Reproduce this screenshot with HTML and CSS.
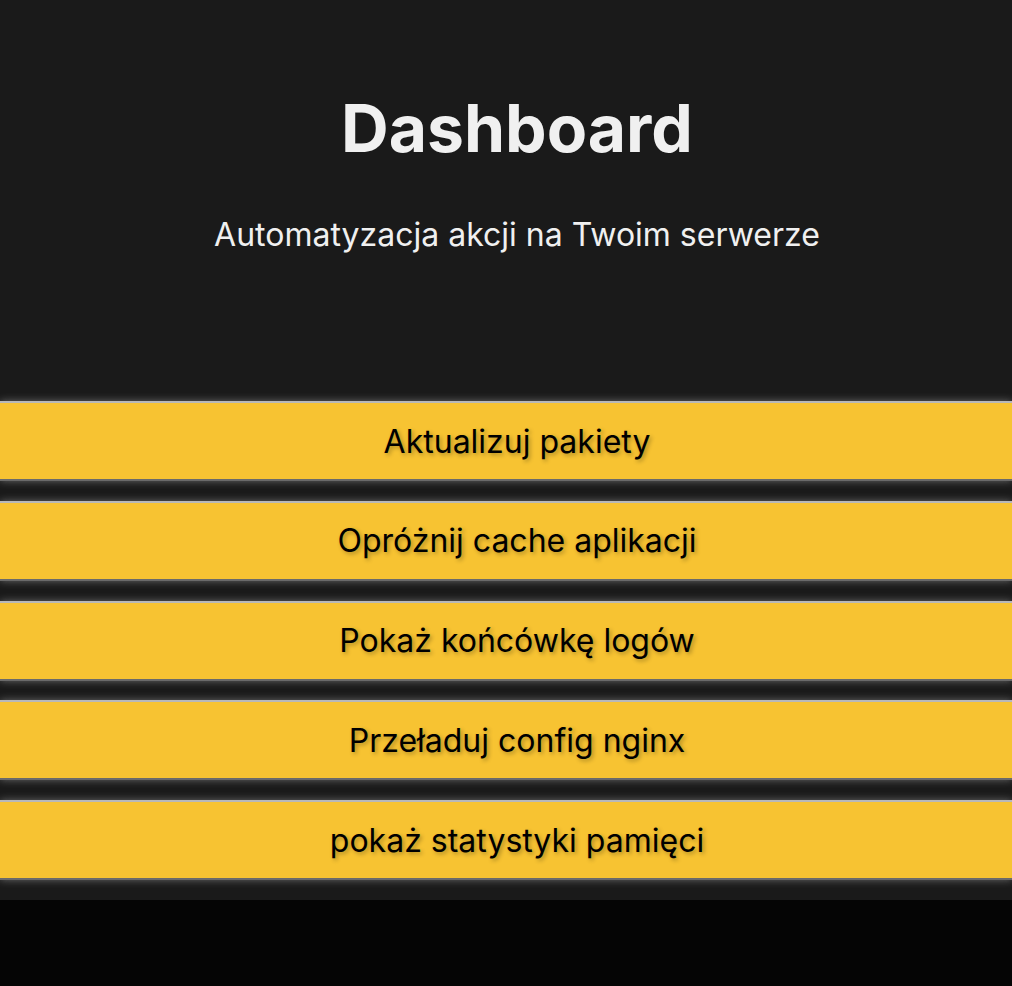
FILE: index.html
```html
<!DOCTYPE html>
<html lang="pl">
<head>
<meta charset="utf-8">
<title>Dashboard</title>
<link rel="stylesheet" href="styles.css">
</head>
<body>
<div class="app">
  <header class="header">
    <h1 class="title">Dashboard</h1>
    <p class="subtitle">Automatyzacja akcji na Twoim serwerze</p>
  </header>
  <main class="actions">
    <button class="action">Aktualizuj pakiety</button>
    <button class="action">Opróżnij cache aplikacji</button>
    <button class="action">Pokaż końcówkę logów</button>
    <button class="action">Przeładuj config nginx</button>
    <button class="action">pokaż statystyki pamięci</button>
  </main>
</div>
</body>
</html>
```

FILE: styles.css
```css
html, body {
  margin: 0;
  padding: 0;
  background: #050505;
}
body {
  font-family: Inter, "Noto Sans", sans-serif;
}
.app {
  background: #1a1a1a;
  padding-bottom: 20px;
}
.header {
  text-align: center;
  padding-top: 88px;
  padding-left: 22px;
  height: 401px;
  box-sizing: border-box;
}
.title {
  margin: 0;
  font-size: 66px;
  line-height: 80px;
  font-weight: 700;
  color: #f0f0f0;
}
.subtitle {
  margin: 47px 0 0;
  font-size: 32px;
  line-height: 40px;
  color: #f0f0f0;
}
.actions {
  display: flex;
  flex-direction: column;
  gap: 19.75px;
}
.action {
  display: block;
  width: 100%;
  height: 80px;
  margin: 0;
  padding: 0 0 0 22px;
  background: #f7c332;
  border: none;
  border-top: 2px solid #b8b8b8;
  border-bottom: 2px solid #6a6a6a;
  box-shadow: 0 0 8px rgba(200, 200, 200, 0.45);
  font-family: Inter, "Noto Sans", sans-serif;
  font-size: 32px;
  color: #000;
  text-shadow: 2px 2px 4px rgba(0, 0, 0, 0.3);
  cursor: pointer;
}
```
